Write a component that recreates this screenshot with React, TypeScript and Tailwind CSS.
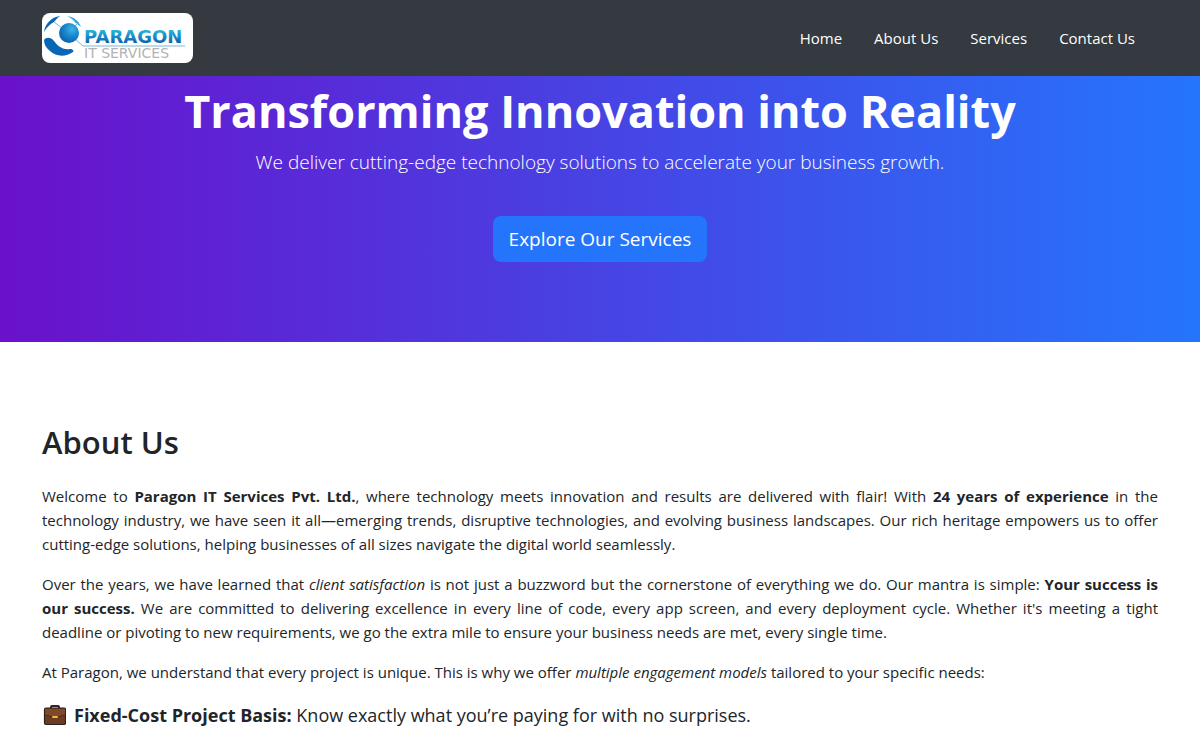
import type { ReactNode } from "react";

const links = [
  { label: "Home", href: "#home" },
  { label: "About Us", href: "#about" },
  { label: "Services", href: "#services" },
  { label: "Contact Us", href: "#contact" },
];

function Logo() {
  return (
    <svg viewBox="0 0 151 50" className="block h-[50px] w-[151px] rounded-lg bg-white" role="img" aria-label="Paragon IT Services">
      <defs>
        <radialGradient id="globe" cx="0.65" cy="0.3" r="0.8">
          <stop offset="0" stopColor="#3fb4e6" />
          <stop offset="0.5" stopColor="#1684cb" />
          <stop offset="1" stopColor="#075da8" />
        </radialGradient>
        <linearGradient id="word" x1="0" y1="0" x2="0" y2="1">
          <stop offset="0.2" stopColor="#27b4df" />
          <stop offset="0.8" stopColor="#0f62ac" />
        </linearGradient>
      </defs>
      <path d="M2 19C3 11 9 4 18 3C15 5 14 7 12 9C8 11 5 14 2 19Z" fill="#0c67b2" />
      <path d="M25 3C32 4 37 8 39 14C36 11 34 11 32 8C30 6 28 4 25 3Z" fill="#2fa4d8" />
      <path d="M2 27C4 24 9 24 12 28C16 34 22 37 28 36C31 36 32 38 31 39C24 44 14 44 8 38C4 35 2 31 2 27Z" fill="#0866b4" />
      <path d="M12 9L20 15M32 14L37 9M33 26L41 33H143" fill="none" stroke="#7fb3d3" strokeWidth="1" />
      <circle cx="27" cy="20" r="10" fill="url(#globe)" />
      <text x="42" y="30" fontFamily="'DejaVu Sans', sans-serif" fontWeight="700" fontSize="18" fill="url(#word)">PARAGON</text>
      <text x="42" y="45" fontFamily="'DejaVu Sans', sans-serif" fontSize="14" fill="#b3b3b3">IT SERVICES</text>
    </svg>
  );
}

function Briefcase() {
  return (
    <svg viewBox="0 0 24 22" className="h-[22px] w-6 shrink-0" aria-hidden="true">
      <path d="M9 5V3Q9 2 10 2H16Q17 2 17 3V5" fill="none" stroke="#342321" strokeWidth="2" />
      <rect x="2.5" y="4" width="21" height="16.5" rx="1.5" fill="#6b3c24" stroke="#2d2020" strokeWidth="1.2" />
      <path d="M3 5H23V11L15 13H11L3 11Z" fill="#7f4a2b" />
      <path d="M3 11L11 13H15L23 11" fill="none" stroke="#4a2b20" strokeWidth="1" />
      <rect x="10" y="12" width="6" height="2" rx="1" fill="#efb92f" />
    </svg>
  );
}

function Paragraph({ children }: { children: ReactNode }) {
  return <p className="mb-4 text-justify text-[15px] leading-6">{children}</p>;
}

export default function App() {
  return (
    <div className="bg-white font-['Open_Sans','Noto_Sans',sans-serif] text-[#212529]">
      <header className="sticky top-0 z-10 flex items-center justify-between bg-[#343a40] px-[42px] py-[13px]">
        <a href="#home">
          <Logo />
        </a>
        <nav className="flex gap-8 pr-[23px] text-[15px] leading-6 text-white">
          {links.map((link) => (
            <a key={link.label} href={link.href}>
              {link.label}
            </a>
          ))}
        </nav>
      </header>
      <main>
        <section id="home" className="bg-linear-to-r/srgb from-[#6a11cb] to-[#2575fc] px-6 pt-1.5 pb-20 text-center text-white">
          <h1 className="mb-2 text-[45px] leading-[58px] font-bold">Transforming Innovation into Reality</h1>
          <p className="mb-10 text-[19px] leading-[28px] font-light">
            We deliver cutting-edge technology solutions to accelerate your business growth.
          </p>
          <a href="#services" className="inline-block rounded-lg bg-[#2575fc] px-4 py-2 text-[19px] leading-[30px]">
            Explore Our Services
          </a>
        </section>
        <section id="about" className="px-[42px] pt-20">
          <h2 className="mb-[22px] text-[31px] leading-10 font-semibold">About Us</h2>
          <Paragraph>
            Welcome to <strong>Paragon IT Services Pvt. Ltd.</strong>, where technology meets innovation and results are
            delivered with flair! With <strong>24 years of experience</strong> in the technology industry, we have seen
            it all—emerging trends, disruptive technologies, and evolving business landscapes. Our rich heritage
            empowers us to offer cutting-edge solutions, helping businesses of all sizes navigate the digital world
            seamlessly.
          </Paragraph>
          <Paragraph>
            Over the years, we have learned that <em>client satisfaction</em> is not just a buzzword but the cornerstone
            of everything we do. Our mantra is simple: <strong>Your success is our success.</strong> We are committed to
            delivering excellence in every line of code, every app screen, and every deployment cycle. Whether it's
            meeting a tight deadline or pivoting to new requirements, we go the extra mile to ensure your business needs
            are met, every single time.
          </Paragraph>
          <Paragraph>
            At Paragon, we understand that every project is unique. This is why we offer{" "}
            <em>multiple engagement models</em> tailored to your specific needs:
          </Paragraph>
          <ul>
            <li className="flex items-center gap-2 text-[18px] leading-[30px]">
              <Briefcase />
              <span>
                <strong>Fixed-Cost Project Basis:</strong> Know exactly what you’re paying for with no surprises.
              </span>
            </li>
          </ul>
        </section>
      </main>
    </div>
  );
}
